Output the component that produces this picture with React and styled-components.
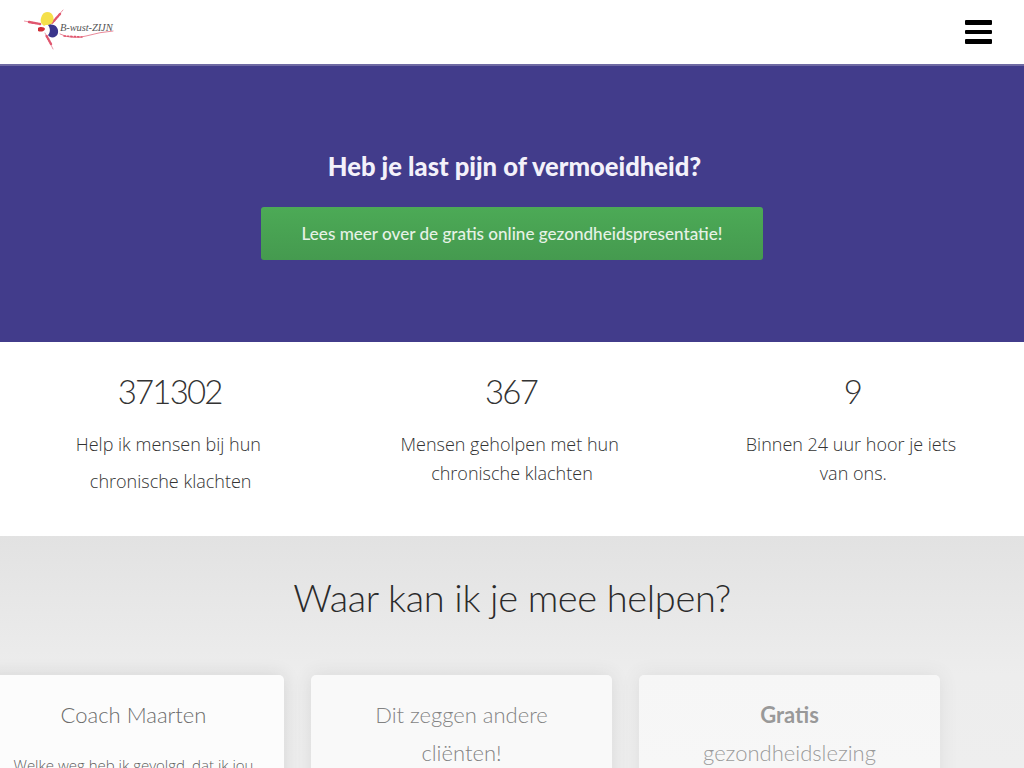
import React from "react";
import styled, { createGlobalStyle } from "styled-components";

const GlobalStyle = createGlobalStyle`
  html, body {
    margin: 0;
    padding: 0;
    background: #fff;
    overflow: hidden;
  }
  * {
    box-sizing: border-box;
  }
`;

const Page = styled.div`
  width: 1024px;
  height: 768px;
  overflow: hidden;
  font-family: "Open Sans", "Liberation Sans", sans-serif;
  color: #333;
`;

const Navbar = styled.header`
  height: 66px;
  padding: 0 32px 2px 24px;
  display: flex;
  align-items: center;
  justify-content: space-between;
  background: #fff;
  border-bottom: 2px solid #6f6aa3;
`;

const Logo = styled.svg`
  display: block;
  width: 90px;
  height: 44px;
  margin-top: -2px;
`;

const LogoText = styled.text`
  font-family: "Liberation Serif", serif;
  font-style: italic;
  font-size: 10.5px;
  letter-spacing: -0.1px;
  fill: #555;
`;

const Hamburger = styled.div`
  width: 27px;
  display: flex;
  flex-direction: column;
  gap: 5px;
  margin-top: 2px;
`;

const HamburgerBar = styled.span`
  display: block;
  height: 4.5px;
  background: #000;
  border-radius: 1px;
`;

const Hero = styled.section`
  height: 276px;
  padding-top: 83px;
  display: flex;
  flex-direction: column;
  align-items: center;
  background: #423c8b;
`;

const HeroTitle = styled.h2`
  margin: 0 0 24px;
  padding-left: 5px;
  font-family: "Lato", sans-serif;
  font-size: 25.6px;
  line-height: 34px;
  font-weight: 900;
  color: #f3f1fa;
`;

const CtaButton = styled.a`
  width: 502px;
  height: 53px;
  display: flex;
  align-items: center;
  justify-content: center;
  border-radius: 3px;
  background: linear-gradient(#4caa56, #459a4f);
  color: #e6f2e6;
  font-family: "Lato", sans-serif;
  font-size: 17.1px;
  font-weight: 500;
`;

const Stats = styled.section`
  height: 194px;
  padding-top: 24px;
  display: grid;
  grid-template-columns: repeat(3, 1fr);
  background: #fff;
  text-align: center;
`;

const Stat = styled.div`
  padding: 0 40px;
`;

const StatNumber = styled.div`
  padding-right: 2px;
  font-family: "Lato", sans-serif;
  font-size: 33px;
  font-weight: 300;
  line-height: 50px;
  letter-spacing: -1.8px;
  color: #333;
`;

const StatText = styled.p`
  margin: ${(p) => (p.$loose ? 10 : 14)}px 0 0;
  font-size: 18px;
  font-weight: 300;
  line-height: ${(p) => (p.$loose ? 37 : 29)}px;
  color: #333;
`;

const Services = styled.section`
  height: 232px;
  background: linear-gradient(#e2e2e2, #ededed 60%, #eeeeee);
  overflow: hidden;
`;

const ServicesTitle = styled.h2`
  margin: 0;
  padding-top: 31px;
  font-family: "Lato", sans-serif;
  font-size: 38px;
  line-height: 60px;
  letter-spacing: -0.35px;
  font-weight: 300;
  text-align: center;
  color: #2b2b2b;
`;

const CardRow = styled.div`
  display: flex;
  gap: 27px;
  margin: 48px 0 0 -17px;
`;

const Card = styled.article`
  flex: 0 0 301px;
  height: 300px;
  padding: 21px 28px 0;
  border-radius: 5px;
  background: #fff;
  box-shadow: 0 0 18px rgba(0, 0, 0, 0.12);
  text-align: center;
  opacity: ${(p) => p.$fade};
`;

const CardTitle = styled.h3`
  margin: 0;
  font-family: "Lato", sans-serif;
  font-size: 22px;
  line-height: 38px;
  font-weight: 300;
  color: #555;

  b {
    display: block;
    font-weight: 700;
  }
`;

const CardBody = styled.p`
  margin: 19px 0 0;
  font-size: 15px;
  line-height: 24px;
  font-weight: 300;
  color: #444;
`;

export default function App() {
  return (
    <Page>
      <GlobalStyle />
      <Navbar>
        <Logo viewBox="0 0 90 44">
          <g stroke="#e0566e" fill="none" strokeLinecap="round">
            <path d="M0 13 L17 16" strokeWidth="0.6" />
            <path d="M5 14 L16 16" strokeWidth="2.4" strokeDasharray="1.4 1.2" />
            <path d="M39 2 L26 17" strokeWidth="0.6" />
            <path d="M36 6 L28 15" strokeWidth="2.4" strokeDasharray="1.4 1.2" />
            <path d="M29 41 L21 25" strokeWidth="0.6" />
            <path d="M27 36 L22 27" strokeWidth="2.4" strokeDasharray="1.4 1.2" />
            <path d="M36 26 Q48 32 62 28 T89 23" strokeWidth="0.7" />
            <path d="M40 28 L58 29" strokeWidth="1.6" strokeDasharray="1.4 2" />
          </g>
          <path d="M23 4 C30 4 31 12 28 15 C26 18 22 16 20 18 C17 16 16 13 17 10 C18 6 20 4 23 4 Z" fill="#f5e04a" />
          <path d="M24 17 C31 15 35 20 34 25 C33 30 26 31 24 27 C26 25 27 21 24 17 Z" fill="#3a358c" />
          <path d="M14 20 C16 18 21 19 21 21 C20 24 16 24 14 23 Z" fill="#cf2f36" />
          <LogoText x="36" y="23">B-wust-ZIJN</LogoText>
        </Logo>
        <Hamburger>
          <HamburgerBar />
          <HamburgerBar />
          <HamburgerBar />
        </Hamburger>
      </Navbar>
      <Hero>
        <HeroTitle>Heb je last pijn of vermoeidheid?</HeroTitle>
        <CtaButton>Lees meer over de gratis online gezondheidspresentatie!</CtaButton>
      </Hero>
      <Stats>
        <Stat>
          <StatNumber>371302</StatNumber>
          <StatText $loose>
            Help ik mensen bij hun&nbsp;
            <br />
            chronische klachten
          </StatText>
        </Stat>
        <Stat>
          <StatNumber>367</StatNumber>
          <StatText>
            Mensen geholpen met hun&nbsp;
            <br />
            chronische klachten
          </StatText>
        </Stat>
        <Stat>
          <StatNumber>9</StatNumber>
          <StatText>
            Binnen 24 uur hoor je iets&nbsp;
            <br />
            van ons.
          </StatText>
        </Stat>
      </Stats>
      <Services>
        <ServicesTitle>Waar kan ik je mee helpen?</ServicesTitle>
        <CardRow>
          <Card $fade={0.85}>
            <CardTitle>Coach Maarten</CardTitle>
            <CardBody>Welke weg heb ik gevolgd, dat ik jou nu kan helpen?</CardBody>
          </Card>
          <Card $fade={0.7}>
            <CardTitle>Dit zeggen andere cliënten!</CardTitle>
          </Card>
          <Card $fade={0.55}>
            <CardTitle>
              <b>Gratis</b> gezondheidslezing
            </CardTitle>
          </Card>
        </CardRow>
      </Services>
    </Page>
  );
}
